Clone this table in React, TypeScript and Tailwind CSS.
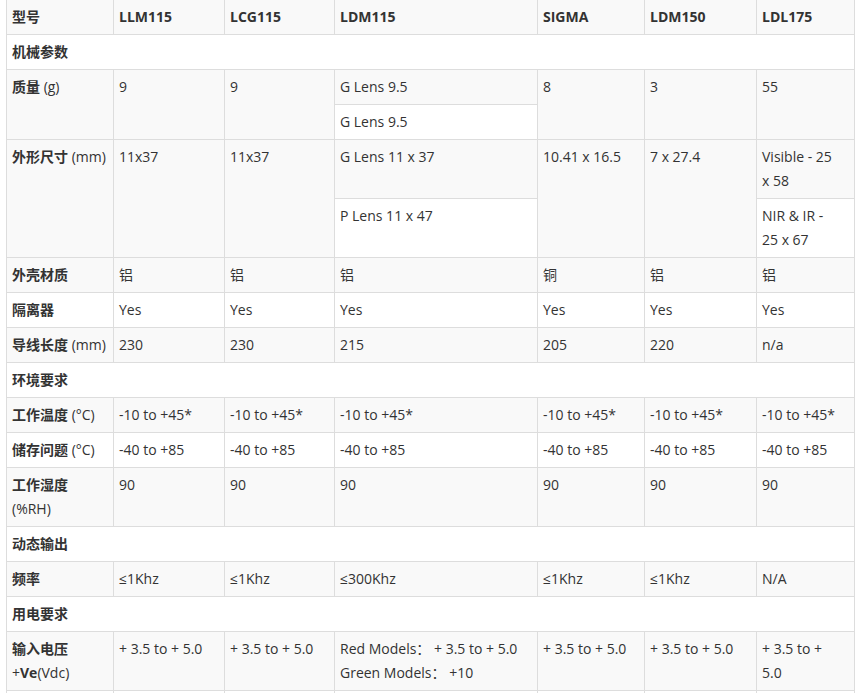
import React from "react";

const G = "bg-[#f9f9f9]";
const W = "bg-white";
const td = "border border-[#dddddd] px-[5px] py-[5px] leading-6 align-top whitespace-nowrap";
const th = "border border-[#dddddd] border-t-0 px-[5px] py-[5px] leading-6 align-top whitespace-nowrap font-bold text-left";

function L({ cn, unit }: { cn: string; unit?: string }) {
  return (
    <>
      <span className="font-bold">{cn}</span>
      {unit ? <span className="font-normal"> {unit}</span> : null}
    </>
  );
}

function Row({ bg, label, vals }: { bg: string; label: React.ReactNode; vals: React.ReactNode[] }) {
  return (
    <tr className={bg}>
      <td className={td}>{label}</td>
      {vals.map((v, i) => (
        <td key={i} className={td}>
          {v}
        </td>
      ))}
    </tr>
  );
}

function Section({ label }: { label: string }) {
  return (
    <tr className={W}>
      <td colSpan={7} className={td + " font-bold"}>
        {label}
      </td>
    </tr>
  );
}

export default function App() {
  return (
    <div
      className="bg-white w-[867px] h-[693px] overflow-hidden pl-[6px] text-[14px] text-[#333333]"
      style={{ fontFamily: '"Open Sans", "Noto Sans CJK SC", sans-serif' }}
    >
      <table className="table-fixed border-collapse w-[848px]">
        <colgroup>
          <col className="w-[107px]" />
          <col className="w-[111px]" />
          <col className="w-[110px]" />
          <col className="w-[203px]" />
          <col className="w-[107px]" />
          <col className="w-[112px]" />
          <col className="w-[98px]" />
        </colgroup>
        <tbody>
          <tr className={G}>
            <th className={th}>型号</th>
            <th className={th}>LLM115</th>
            <th className={th}>LCG115</th>
            <th className={th}>LDM115</th>
            <th className={th}>SIGMA</th>
            <th className={th}>LDM150</th>
            <th className={th}>LDL175</th>
          </tr>
          <Section label="机械参数" />
          <tr className={G}>
            <td className={td}>
              <L cn="质量" unit="(g)" />
            </td>
            <td className={td}>9</td>
            <td className={td}>9</td>
            <td className="border border-[#dddddd] p-0 align-top">
              <div className="flex flex-col">
                <div className="px-[5px] py-[5px] leading-6 bg-[#f9f9f9]">G Lens 9.5</div>
                <div className="px-[5px] py-[5px] leading-6 bg-white border-t border-[#dddddd]">G Lens 9.5</div>
              </div>
            </td>
            <td className={td}>8</td>
            <td className={td}>3</td>
            <td className={td}>55</td>
          </tr>
          <tr className={G}>
            <td className={td}>
              <L cn="外形尺寸" unit="(mm)" />
            </td>
            <td className={td}>11x37</td>
            <td className={td}>11x37</td>
            <td className="border border-[#dddddd] p-0 align-top">
              <div className="flex flex-col">
                <div className="h-[58px] px-[5px] py-[5px] leading-6 bg-[#f9f9f9]">G Lens 11 x 37</div>
                <div className="h-[59px] px-[5px] py-[5px] leading-6 bg-white border-t border-[#dddddd]">P Lens 11 x 47</div>
              </div>
            </td>
            <td className={td}>10.41 x 16.5</td>
            <td className={td}>7 x 27.4</td>
            <td className="border border-[#dddddd] p-0 align-top">
              <div className="flex flex-col">
                <div className="h-[58px] px-[5px] py-[5px] leading-6 bg-[#f9f9f9] whitespace-nowrap">
                  Visible - 25
                  <br />x 58
                </div>
                <div className="h-[59px] px-[5px] py-[5px] leading-6 bg-white border-t border-[#dddddd] whitespace-nowrap">
                  NIR &amp; IR -
                  <br />
                  25 x 67
                </div>
              </div>
            </td>
          </tr>
          <Row bg={G} label={<L cn="外壳材质" />} vals={["铝", "铝", "铝", "铜", "铝", "铝"]} />
          <Row bg={W} label={<L cn="隔离器" />} vals={["Yes", "Yes", "Yes", "Yes", "Yes", "Yes"]} />
          <Row bg={G} label={<L cn="导线长度" unit="(mm)" />} vals={["230", "230", "215", "205", "220", "n/a"]} />
          <Section label="环境要求" />
          <Row
            bg={G}
            label={<L cn="工作温度" unit="(°C)" />}
            vals={["-10 to +45*", "-10 to +45*", "-10 to +45*", "-10 to +45*", "-10 to +45*", "-10 to +45*"]}
          />
          <Row
            bg={W}
            label={<L cn="储存问题" unit="(°C)" />}
            vals={["-40 to +85", "-40 to +85", "-40 to +85", "-40 to +85", "-40 to +85", "-40 to +85"]}
          />
          <tr className={G}>
            <td className={td}>
              <span className="font-bold">工作湿度</span>
              <br />
              (%RH)
            </td>
            <td className={td}>90</td>
            <td className={td}>90</td>
            <td className={td}>90</td>
            <td className={td}>90</td>
            <td className={td}>90</td>
            <td className={td}>90</td>
          </tr>
          <Section label="动态输出" />
          <Row bg={G} label={<L cn="频率" />} vals={["≤1Khz", "≤1Khz", "≤300Khz", "≤1Khz", "≤1Khz", "N/A"]} />
          <Section label="用电要求" />
          <tr className={G}>
            <td className={td}>
              <span className="font-bold">输入电压</span>
              <br />+<span className="font-bold">Ve</span>(Vdc)
            </td>
            <td className={td}>+ 3.5 to + 5.0</td>
            <td className={td}>+ 3.5 to + 5.0</td>
            <td className={td}>
              Red Models：&nbsp;+ 3.5 to + 5.0
              <br />
              Green Models：&nbsp;+10
            </td>
            <td className={td}>+ 3.5 to + 5.0</td>
            <td className={td}>+ 3.5 to + 5.0</td>
            <td className={td}>
              + 3.5 to +
              <br />
              5.0
            </td>
          </tr>
          <tr className={W}>
            <td className={td}>&nbsp;</td>
            <td className={td}>&nbsp;</td>
            <td className={td}>&nbsp;</td>
            <td className={td}>&nbsp;</td>
            <td className={td}>&nbsp;</td>
            <td className={td}>&nbsp;</td>
            <td className={td}>&nbsp;</td>
          </tr>
        </tbody>
      </table>
    </div>
  );
}
